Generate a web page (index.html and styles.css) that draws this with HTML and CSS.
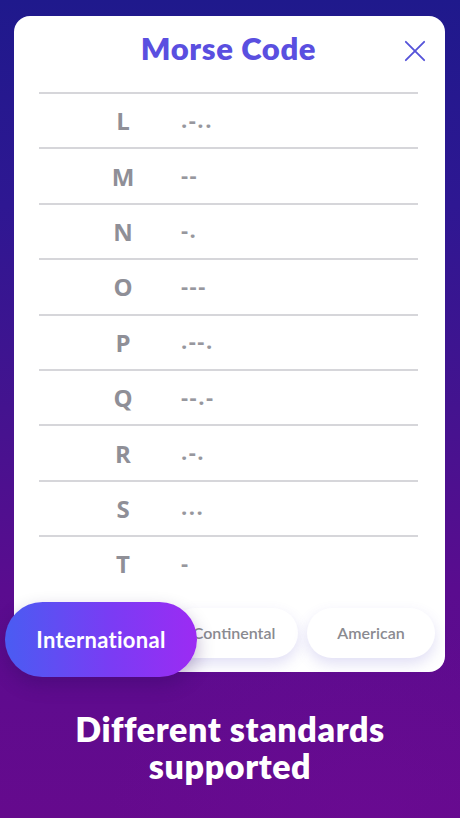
FILE: index.html
```html
<!DOCTYPE html>
<html>
<head>
<meta charset="utf-8">
<link rel="stylesheet" href="styles.css">
</head>
<body>
<div class="screen">
  <div class="card">
    <div class="header">
      <h1 class="title">Morse Code</h1>
      <svg class="close" viewBox="0 0 24 24" width="24" height="24"><path d="M2 2 L22 22 M22 2 L2 22" stroke="#5553d9" stroke-width="2" fill="none" stroke-linecap="round"/></svg>
    </div>
    <div class="table">
      <div class="row"><span class="letter">L</span><span class="code">.-..</span></div>
      <div class="row"><span class="letter">M</span><span class="code">--</span></div>
      <div class="row"><span class="letter">N</span><span class="code">-.</span></div>
      <div class="row"><span class="letter">O</span><span class="code">---</span></div>
      <div class="row"><span class="letter">P</span><span class="code">.--.</span></div>
      <div class="row"><span class="letter">Q</span><span class="code">--.-</span></div>
      <div class="row"><span class="letter">R</span><span class="code">.-.</span></div>
      <div class="row"><span class="letter">S</span><span class="code">...</span></div>
      <div class="row last"><span class="letter">T</span><span class="code">-</span></div>
    </div>
    <div class="standards">
      <button class="pill">Continental</button>
      <button class="pill">American</button>
      <button class="pill active">International</button>
    </div>
  </div>
  <div class="caption">
    <span class="caption-line">Different standards</span>
    <span class="caption-line">supported</span>
  </div>
</div>
</body>
</html>
```
FILE: styles.css
```css
html, body {
  margin: 0;
  padding: 0;
}
body {
  width: 460px;
  height: 818px;
  overflow: hidden;
  font-family: "Lato", "Open Sans", sans-serif;
}
.screen {
  width: 460px;
  height: 818px;
  box-sizing: border-box;
  padding-top: 16px;
  background:
    radial-gradient(ellipse 260px 200px at 80% 100%, rgba(110, 10, 150, 0.45), transparent),
    linear-gradient(180deg, #1f198c 0%, #2e1792 25%, #44138f 50%, #5a0c8f 72%, #650a8d 100%);
  display: flex;
  flex-direction: column;
  align-items: flex-start;
}
.card {
  position: relative;
  margin-left: 14px;
  width: 431px;
  height: 656px;
  box-sizing: border-box;
  background: #fff;
  border-radius: 16px;
  padding: 0 27px 0 25px;
  display: flex;
  flex-direction: column;
}
.header {
  height: 76px;
  display: flex;
  align-items: flex-start;
  justify-content: center;
  position: relative;
}
.title {
  margin: 0;
  margin-top: 14px;
  font-size: 31px;
  line-height: 36px;
  font-weight: 800;
  color: #5a4fe0;
  letter-spacing: 0.6px;
}
.close {
  position: absolute;
  right: -8px;
  top: 24px;
  width: 22px;
  height: 22px;
}
.table {
  display: flex;
  flex-direction: column;
}
.row {
  height: 55.4px;
  box-sizing: border-box;
  border-top: 2px solid #d6d6da;
  display: flex;
  align-items: center;
  color: #8f8f97;
  font-family: "Open Sans", "DejaVu Sans", sans-serif;
  font-weight: 700;
}
.letter {
  width: 40px;
  margin-left: 64px;
  text-align: center;
  font-size: 24px;
}
.code {
  margin-left: 38px;
  font-size: 22px;
  letter-spacing: 1.5px;
  padding-bottom: 4px;
  color: #97979e;
}
.standards {
  margin-top: 17px;
  display: flex;
  justify-content: flex-end;
  gap: 9px;
  margin-right: -17px;
}
.pill {
  width: 128px;
  height: 50px;
  border: none;
  border-radius: 25px;
  background: #fff;
  box-shadow: 0 6px 14px rgba(90, 80, 200, 0.18);
  font-family: "Lato", "Open Sans", sans-serif;
  font-size: 16px;
  font-weight: 600;
  color: #8a8a90;
  padding: 0;
}
.pill.active {
  position: absolute;
  left: -9px;
  top: 586px;
  width: 192px;
  height: 75px;
  border-radius: 38px;
  background: linear-gradient(90deg, #4a5cf2 0%, #7a3cf4 55%, #9c2bf3 100%);
  color: #fff;
  font-size: 22px;
  font-weight: 700;
  letter-spacing: 0.3px;
  box-shadow: 0 8px 18px rgba(40, 10, 90, 0.3);
}
.caption {
  align-self: stretch;
  margin-top: 38px;
  display: flex;
  flex-direction: column;
  align-items: center;
  color: #fff;
  font-size: 34px;
  font-weight: 800;
  letter-spacing: 0.6px;
}
.caption-line {
  display: block;
  line-height: 37px;
  height: 37px;
}
```
